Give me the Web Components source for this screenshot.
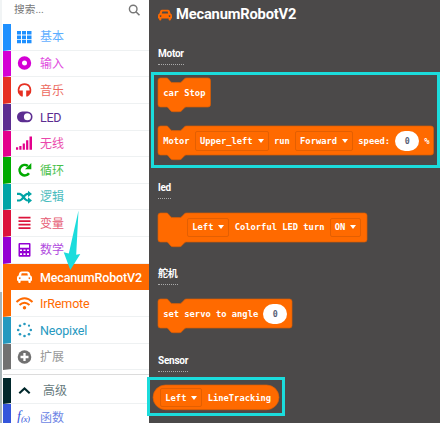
<!DOCTYPE html>
<html lang="zh"><head><meta charset="utf-8"><title>MecanumRobotV2</title>
<style>
html,body{margin:0;width:440px;height:423px;overflow:hidden;background:#fff}
body{font-family:Roboto,"Noto Sans CJK SC",sans-serif}
</style></head><body>
<block-editor></block-editor>
<script>
const ICONS={
grid:'<g fill="currentColor"><path d="M0 2h4v3.5H0zM5 2h4v3.5H5zM10 2h4.5v3.5H10zM0 6.4h4v3.5H0zM5 6.4h4v3.5H5zM10 6.4h4.5v3.5H10zM0 10.8h4v3.4H0zM5 10.8h4v3.4H5zM10 10.8h4.5v3.4H10z"/></g>',
target:'<circle cx="7.5" cy="8" r="4.6" fill="none" stroke="currentColor" stroke-width="4.2"/>',
phones:'<path d="M2.2 11.5C.2 5.500 3.300 2.200 7.500 2.200S14.800 5.500 12.800 11.500" fill="none" stroke="currentColor" stroke-width="1.700"/><path d="M2 8.500h3.800v6H4.400Q1.800 13.200 1.400 10zM13 8.500H9.200v6h1.400q2.600-1.300 3-4.500z" fill="currentColor"/>',
toggle:'<rect x="0" y="2.500" width="15.500" height="10.700" rx="5.300" fill="currentColor"/><circle cx="10.400" cy="7.850" r="3.500" fill="#fff"/>',
signal:'<path d="M-1 12.200h2.200v2.500H-1zM2.300 11h2.200v3.700H2.300zM5.700 8.500h2.200v6.200H5.700zM9.100 5.300h2.200v9.400H9.100zM12.500 1.500h2.500v13.200h-2.500z" fill="currentColor"/>',
redo:'<path d="M12 11.300A5.200 5.200 0 1 1 10.900 4" fill="none" stroke="currentColor" stroke-width="2.500"/><path d="M14.300 1v6.200H8z" fill="currentColor"/>',
shuffle:'<path d="M0 4.900h2.400C6 4.900 7 11.500 10.600 11.500H12M0 11.500h2.400C6 11.500 7 4.900 10.600 4.900H12" fill="none" stroke="currentColor" stroke-width="2.100"/><path d="M11 1.700l4 3.200-4 3.200zM11 8.300l4 3.200-4 3.200z" fill="currentColor"/>',
lines:'<path d="M1.500 2.700h12M1.500 6.200h12M1.500 9.700h12M1.500 13.200h12" stroke="currentColor" stroke-width="1.700"/>',
calc:'<path fill-rule="evenodd" d="M2.500 1h10q1 0 1 1v11.700q0 1-1 1h-10q-1 0-1-1V2q0-1 1-1zM3 2.500v3.200h9V2.500zM3 7.500v1.600h2V7.500zM6.500 7.500v1.600h2V7.500zM10 7.500v1.600h2V7.500zM3 11.200v1.700h2v-1.700zM6.500 11.200v1.700h2v-1.700zM10 11.200v1.700h2v-1.700z" fill="currentColor"/>',
car:'<path fill-rule="evenodd" d="M4.500 2.500h6q1.700 0 2.200 1.600L13.400 6.500q1.600.4 1.600 2.200v3h-1.200v1.200q0 1.100-1.200 1.100t-1.200-1.100v-1.200H3.600v1.200q0 1.100-1.200 1.100t-1.200-1.100v-1.200H0v-3Q0 6.900 1.600 6.500l.7-2.400q.5-1.600 2.200-1.600zM4.700 4.300L4.100 6.400h6.800l-.6-2.100zM2.700 8.200a.9.900 0 1 0 .1 0zM12.300 8.200a.9.900 0 1 0 .1 0z" fill="currentColor"/>',
wifi:'<g fill="none" stroke="currentColor" stroke-width="2"><path d="M-.5 6.900q8-7.400 16 0M2.500 10.100q5-4.600 10 0"/></g><circle cx="7.500" cy="12.700" r="1.700" fill="currentColor"/>',
spinner:'<g fill="currentColor"><circle cx="7.500" cy="2" r="1.300"/><circle cx="3" cy="3.700" r="1.300"/><circle cx="1.200" cy="8" r="1.300"/><circle cx="3" cy="12.200" r="1.300"/><circle cx="7.500" cy="14" r="1.300"/><circle cx="12" cy="12.200" r="1.300"/><circle cx="13.800" cy="8" r="1.300"/><circle cx="12" cy="3.700" r="1.100"/></g>',
plus:'<circle cx="7.500" cy="8" r="6.800" fill="currentColor"/><path d="M7.500 4v8M3.500 8h8" stroke="#fff" stroke-width="2.300"/>',
up:'<path d="M2.300 10.300l5.200-4.900 5.200 4.900" fill="none" stroke="currentColor" stroke-width="2.100"/>',
search:'<circle cx="6.200" cy="7" r="3.800" fill="none" stroke="currentColor" stroke-width="1.400"/><path d="M8.900 9.700l3.600 3.600" stroke="currentColor" stroke-width="1.600"/>'
};
function root(el,html){el.attachShadow({mode:'open'}).innerHTML=html}
customElements.define('ui-icon',class extends HTMLElement{connectedCallback(){
 root(this,`<style>:host{display:block;width:15px;height:16px;flex:none}svg{display:block;width:100%;height:100%;overflow:visible}</style><svg viewBox="0 0 15 16">${ICONS[this.getAttribute('name')]}</svg>`)}});
customElements.define('fx-icon',class extends HTMLElement{connectedCallback(){
 root(this,`<style>:host{display:block;width:15px;flex:none;padding-top:2px;font:italic 14px/16px "Liberation Serif",serif;white-space:nowrap}small{font-size:9px;vertical-align:-1px;letter-spacing:-.4px}</style><span>f<small>(x)</small></span>`)}});
customElements.define('category-row',class extends HTMLElement{connectedCallback(){
 const c=this.getAttribute('color'),n=this.getAttribute('icon');
 root(this,`<style>
 :host{display:flex;box-sizing:border-box;height:26.650px;border-left:8px solid ${c};align-items:center;padding-left:6px;color:${c};font-size:12.500px;line-height:16px;white-space:nowrap;border-bottom:1px solid #eef1f2}
 :host([selected]){background:#ff6a00;color:#fff;font-weight:500;border-bottom-color:#ff6a00}
 .t{margin-left:8px;padding-top:2px}
 :host([cjk]) .t{font-size:12px;opacity:.72;padding-top:1px}
 :host([indent]) .t{margin-left:11px;opacity:.62}
 </style>${n==='fx'?'<fx-icon></fx-icon>':`<ui-icon name="${n}"></ui-icon>`}<span class="t" style="letter-spacing:${this.getAttribute('track')||0}px"><slot></slot></span>`)}});
customElements.define('search-box',class extends HTMLElement{connectedCallback(){
 root(this,`<style>:host{display:flex;height:24px;box-sizing:border-box;padding:0 7px 5px 11px;align-items:center;justify-content:space-between;font-size:10.700px;line-height:16px;color:#777}</style><slot></slot><ui-icon name="search" style="color:#777"></ui-icon>`)}});
customElements.define('tool-box',class extends HTMLElement{connectedCallback(){
 root(this,`<style>:host{display:block;width:149px;height:423px;box-sizing:border-box;padding-left:3px;overflow:hidden;background:linear-gradient(#f1f4f5 0 292px,#a8b4b7 292px) 0 0/2px 100% no-repeat #fff}
 .rule{height:7.500px;box-sizing:border-box;padding-top:3.500px}.rule:before{content:"";display:block;height:1px;background:#dcdcdc}</style>
 <search-box>搜索...</search-box>
 <category-row cjk color="#1e90ff" icon="grid">基本</category-row>
 <category-row cjk color="#d400d4" icon="target">输入</category-row>
 <category-row cjk color="#e63022" icon="phones">音乐</category-row>
 <category-row color="#5c2d91" icon="toggle" track="-.3">LED</category-row>
 <category-row cjk color="#e3008c" icon="signal">无线</category-row>
 <category-row cjk color="#00aa00" icon="redo">循环</category-row>
 <category-row cjk color="#00a4a6" icon="shuffle">逻辑</category-row>
 <category-row cjk color="#dc143c" icon="lines">变量</category-row>
 <category-row cjk color="#9400d3" icon="calc">数学</category-row>
 <category-row selected color="#ff6a00" icon="car" track="-.16">MecanumRobotV2</category-row>
 <category-row color="#ff6a00" icon="wifi" track="-.16">IrRemote</category-row>
 <category-row color="#2699bf" icon="spinner" track="-.16">Neopixel</category-row>
 <category-row cjk color="#717171" icon="plus">扩展</category-row>
 <div class="rule"></div>
 <category-row cjk indent color="#00272b" icon="up">高级</category-row>
 <category-row cjk color="#3455db" icon="fx">函数</category-row>`)}});
customElements.define('drop-field',class extends HTMLElement{connectedCallback(){
 root(this,`<style>:host{display:flex;box-sizing:border-box;height:19.500px;align-items:center;gap:5px;padding:0 4px;border:1px solid #e35f02;border-radius:2px}i{width:0;height:0;border:3px solid transparent;border-top:4px solid #fff;border-bottom:0}</style><slot></slot><i></i>`)}});
customElements.define('number-field',class extends HTMLElement{connectedCallback(){
 root(this,`<style>:host{display:flex;width:23.700px;height:19.700px;border-radius:10px;background:#fff;color:#575e75;align-items:center;justify-content:center;font-size:8.300px}</style><slot></slot>`)}});
customElements.define('code-block',class extends HTMLElement{connectedCallback(){
 const w=+this.getAttribute('w'),pill=this.hasAttribute('pill');
 const d=pill?`M12.400 0H${w-12.4}a12.350 12.350 0 0 1 0 24.700H12.400a12.350 12.350 0 0 1 0-24.700z`
 :`M0 2.500Q0 0 2.500 0H8.500Q9.800 0 10.700 1.400L12.300 3.400Q13.300 4.600 15 4.600H21.300Q23 4.600 24 3.400L26 1.200Q27 0 28.500 0H${w-2.5}q2.500 0 2.500 2.500V26.500q0 2.500-2.500 2.500H28.500Q27 29 26 30.200L24 32.400Q23 33.700 21.300 33.700H15Q13.300 33.700 12.300 32.400L10.700 30.400Q9.800 29 8.500 29H2.500Q0 29 0 26.500z`;
 root(this,`<style>:host{display:flex;position:relative;box-sizing:border-box;width:${w}px;height:${pill?24.7:29}px;padding-left:${this.getAttribute('start')||5.2}px;align-items:center;gap:5.300px;font:bold 8.780px/12px "DejaVu Sans Mono",monospace;color:#fff;white-space:nowrap}
 svg{position:absolute;left:0;top:0;width:100%;height:100%;overflow:visible;z-index:-1}</style><svg><path d="${d}" fill="#ff6a00" stroke="#d95c04" stroke-width=".7"/></svg><slot></slot>`)}});
customElements.define('group-label',class extends HTMLElement{connectedCallback(){
 root(this,`<style>:host{display:block;box-sizing:border-box;width:fit-content;height:18px;border-bottom:1px dotted #aaa;font:bold 10px/14px Roboto,"Noto Sans CJK SC",sans-serif;letter-spacing:-.25px;color:#fff}</style><slot></slot>`)}});
customElements.define('fly-out',class extends HTMLElement{connectedCallback(){
 root(this,`<style>:host{display:block;box-sizing:border-box;width:291px;height:423px;background:#4b4949;padding:5px 0 0 9px;position:relative;z-index:0;overflow:hidden}
 h1{display:flex;align-items:center;gap:4px;margin:0;height:19px;font:bold 14.700px/19px Roboto,sans-serif;letter-spacing:-.18px;color:#fff}h1 ui-icon{color:#ff6a00;width:14px}</style>
 <h1><ui-icon name="car"></ui-icon><span>MecanumRobotV2</span></h1>
 <group-label style="margin-top:23px">Motor</group-label>
 <code-block w="52.5" style="margin-top:13.300px"><span>car Stop</span></code-block>
 <code-block w="275.5" style="margin-top:19px"><span>Motor</span><drop-field>Upper_left</drop-field><span>run</span><drop-field>Forward</drop-field><span>speed:</span><number-field>0</number-field><span>%</span></code-block>
 <group-label style="margin-top:25.700px">led</group-label>
 <code-block w="209" start="29.3" style="margin-top:14px"><drop-field>Left</drop-field><span>Colorful LED turn</span><drop-field>ON</drop-field></code-block>
 <group-label style="margin-top:25px">舵机</group-label>
 <code-block w="134" style="margin-top:14.300px"><span>set servo to angle</span><number-field>0</number-field></code-block>
 <group-label style="margin-top:25.700px">Sensor</group-label>
 <code-block pill w="126" start="7.3" style="margin:13.300px 0 0 -5px"><drop-field>Left</drop-field><span>LineTracking</span></code-block>`)}});
customElements.define('callout-layer',class extends HTMLElement{connectedCallback(){
 root(this,`<style>:host{position:absolute;inset:0;pointer-events:none}svg{display:block}</style><svg width="440" height="423"><g fill="none" stroke="#1bdcdc" stroke-width="3"><path d="M152.500 73.500h286v93h-286zM148.500 378.500h135v36h-135z"/></g><path d="M78.500 210.500L76.200 254.800 80.300 254 70.300 270 63.700 252.300 68.800 253.500z" fill="#1bdcdc"/></svg>`)}});
customElements.define('block-editor',class extends HTMLElement{connectedCallback(){
 root(this,`<style>:host{display:flex;position:relative;width:440px;height:423px;overflow:hidden}</style><tool-box></tool-box><fly-out></fly-out><callout-layer></callout-layer>`)}});
</script></body></html>
